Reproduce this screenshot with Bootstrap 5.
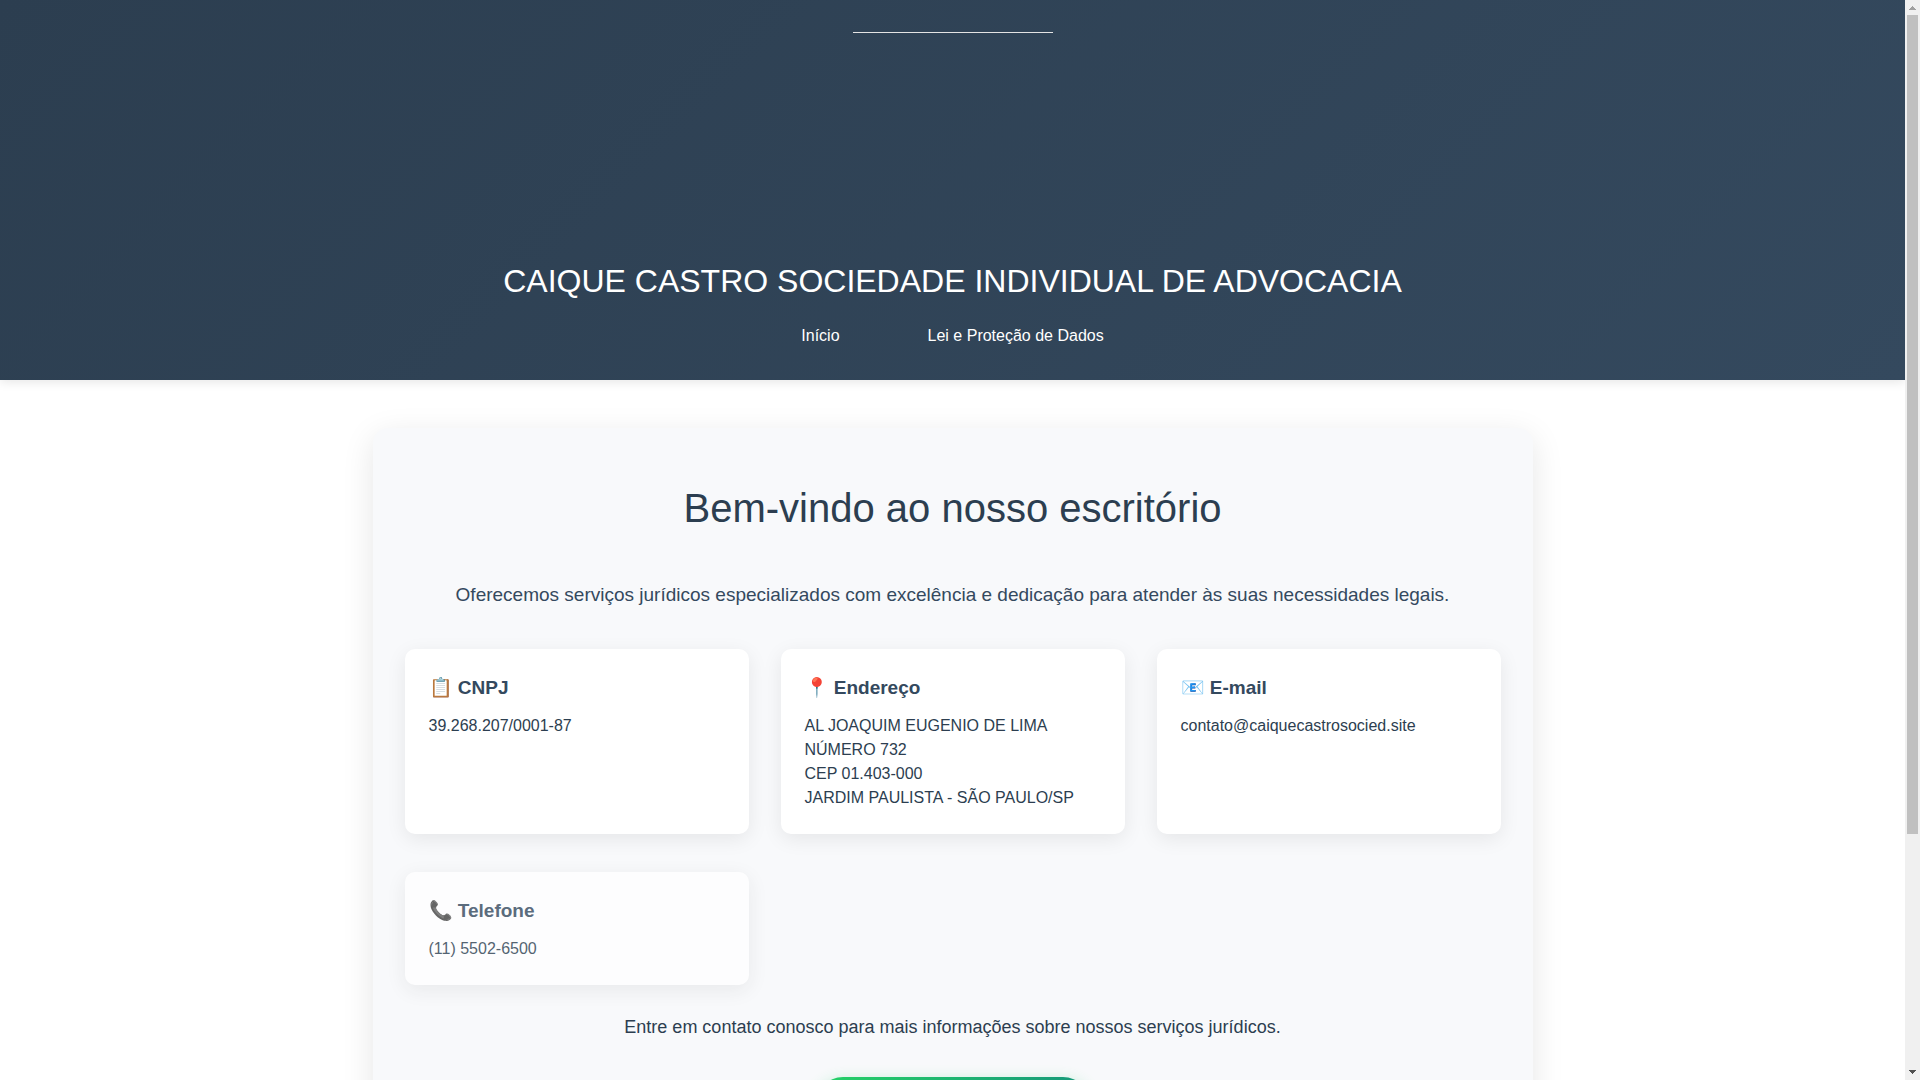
<!DOCTYPE html>
<html lang="pt-BR">
<head>
<meta charset="utf-8">
<meta name="viewport" content="width=device-width, initial-scale=1">
<title>CAIQUE CASTRO SOCIEDADE INDIVIDUAL DE ADVOCACIA</title>
<link href="https://cdn.jsdelivr.net/npm/bootstrap@5.3.0/dist/css/bootstrap.min.css" rel="stylesheet">
<style>
  body { font-family: "Liberation Sans", Arial, sans-serif; color: #2c3e50; background: #fff; }
  .site-header { background: linear-gradient(135deg, #2c3e50 0%, #34495e 100%); box-shadow: 0 2px 10px rgba(0,0,0,.1); padding: 32px 0; }
  .brand-mark { width: 200px; height: 200px; border-top: 1px solid #e4e4e4; }
  .brand-name { font-size: 32px; line-height: 48px; margin: 25px 0 18px; font-weight: 400; }
  .site-nav { gap: 88px; }
  .site-nav a { line-height: 25px; }
  .content-wrap { max-width: 1200px; padding: 48px 20px; }
  .welcome { background: #f8f9fb; border-radius: 15px; box-shadow: 0 8px 32px rgba(0,0,0,.1); padding: 48px 32px; }
  .welcome-title { font-size: 40px; line-height: 64px; font-weight: 400; margin-bottom: 39px; }
  .welcome-intro { font-size: 19px; line-height: 32px; color: #34495e; margin-bottom: 38px; }
  .info-grid { --bs-gutter-x: 32px; --bs-gutter-y: 38px; }
  .info-card { background: #fff; border-radius: 10px; padding: 24px; box-shadow: 0 5px 20px rgba(0,0,0,.08); }
  .info-card h3 { font-size: 19px; line-height: 29px; font-weight: 700; color: #34495e; margin-bottom: 12px; }
  .info-fading { opacity: .8; }
  .contact-line { font-size: 18px; line-height: 28px; margin: 28px 0 36px; }
  .whats-btn { width: 276px; max-width: 100%; height: 56px; border: 0; border-radius: 28px; color: #fff; background: linear-gradient(135deg, #25d366, #128c7e); box-shadow: 0 4px 15px rgba(37,211,102,.3); }
  .scroll-track { width: 15px; background: #f0f0f0; }
  .scroll-track svg { display: block; width: 15px; height: 15px; }
  .scroll-thumb { width: 11px; flex: 78 1 0; background: #c0c0c0; }
  .scroll-rest { flex: 22 1 0; }
</style>
<script src="https://cdn.jsdelivr.net/npm/bootstrap@5.3.0/dist/js/bootstrap.bundle.min.js"></script>
</head>
<body>
<div class="d-flex vh-100 overflow-hidden">
  <div class="flex-grow-1 overflow-hidden">
    <header class="site-header text-white d-flex flex-column align-items-center position-relative">
      <div class="brand-mark"></div>
      <h1 class="brand-name text-center">CAIQUE CASTRO SOCIEDADE INDIVIDUAL DE ADVOCACIA</h1>
      <nav class="site-nav d-flex justify-content-center">
        <a class="text-white text-decoration-none" href="#inicio">Início</a>
        <a class="text-white text-decoration-none" href="#lei">Lei e Proteção de Dados</a>
      </nav>
    </header>
    <main class="content-wrap mx-auto" id="inicio">
      <section class="welcome">
        <h2 class="welcome-title text-center">Bem-vindo ao nosso escritório</h2>
        <p class="welcome-intro text-center">Oferecemos serviços jurídicos especializados com excelência e dedicação para atender às suas necessidades legais.</p>
        <div class="row row-cols-1 row-cols-md-3 info-grid">
          <div class="col"><div class="info-card h-100">
            <h3>📋 CNPJ</h3>
            <p class="mb-0">39.268.207/0001-87</p>
          </div></div>
          <div class="col"><div class="info-card h-100">
            <h3>📍 Endereço</h3>
            <p class="mb-0">AL JOAQUIM EUGENIO DE LIMA<br>NÚMERO 732<br>CEP 01.403-000<br>JARDIM PAULISTA - SÃO PAULO/SP</p>
          </div></div>
          <div class="col"><div class="info-card h-100">
            <h3>📧 E-mail</h3>
            <p class="mb-0">contato@caiquecastrosocied.site</p>
          </div></div>
          <div class="col"><div class="info-card info-fading h-100">
            <h3>📞 Telefone</h3>
            <p class="mb-0">(11) 5502-6500</p>
          </div></div>
        </div>
        <p class="contact-line text-center">Entre em contato conosco para mais informações sobre nossos serviços jurídicos.</p>
        <div class="text-center">
          <button type="button" class="whats-btn" aria-label="WhatsApp">
            <svg width="24" height="24" viewBox="0 0 24 24" fill="none" stroke="currentColor" stroke-width="2" aria-hidden="true"><path d="M3 21l2-5a9 9 0 1 1 3 3z"/></svg>
          </button>
        </div>
      </section>
    </main>
  </div>
  <div class="scroll-track d-flex flex-column align-items-center flex-shrink-0" aria-hidden="true">
    <svg viewBox="0 0 15 15"><path d="M7 6h1v1h1v1h1v1h1v1H4V9h1V8h1V7h1z" fill="#a0a0a0"/></svg>
    <div class="scroll-thumb"></div>
    <div class="scroll-rest"></div>
    <svg viewBox="0 0 15 15"><path d="M4 5h7v1h-1v1H9v1H8v1H7V8H6V7H5V6H4z" fill="#505050"/></svg>
  </div>
</div>
</body>
</html>
